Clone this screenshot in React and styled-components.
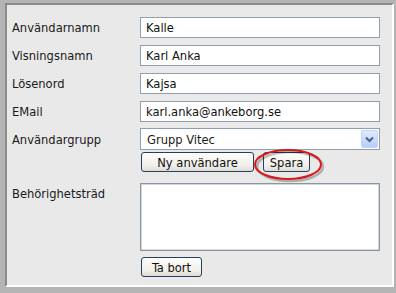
import React from "react"
import styled, { createGlobalStyle } from "styled-components"

const GlobalStyle = createGlobalStyle`
  html, body {
    margin: 0;
    padding: 0;
    background: #b4b4b4;
  }
  * {
    box-sizing: border-box;
  }
`

const font = `"DejaVu Sans Condensed", "Noto Sans", sans-serif`

const Frame = styled.div`
  width: 396px;
  height: 293px;
  background: #b4b4b4;
  padding: 3px 2px 6px 5px;
`

const Panel = styled.div`
  height: 100%;
  background: #e9e9e9;
  border-style: solid;
  border-width: 2px;
  border-color: #8a8a8a #ffffff #ffffff #8a8a8a;
  padding: 12px 0 0 3px;
  font-family: ${font};
  font-size: 12.8px;
  color: #1a1a1a;
`

const Form = styled.div`
  display: grid;
  grid-template-columns: 130px 240px;
  align-items: center;
`

const Label = styled.div`
  padding-left: 2px;
  align-self: ${props => (props.top ? "start" : "center")};
  padding-top: ${props => (props.top ? "3px" : "0")};
  margin-top: ${props => props.mt || 0}px;
`

const Field = styled.div`
  margin-top: ${props => props.mt || 0}px;
  display: flex;
  gap: ${props => props.gap || 0}px;
  align-items: center;
`

const TextInput = styled.input`
  width: 240px;
  height: 21px;
  border: 1px solid #8f9fae;
  background: #fff;
  padding: 0 5px;
  font-family: ${font};
  font-size: 12.8px;
  color: #111;
  outline: none;
`

const Select = styled.div`
  width: 240px;
  height: 22px;
  border: 1px solid #8f9fae;
  background: #fff;
  display: flex;
  align-items: center;
  justify-content: space-between;
  padding: 0 1px 0 6px;
`

const Arrow = styled.div`
  width: 17px;
  height: 18px;
  border: 1px solid #c3d3fd;
  border-radius: 2px;
  background: linear-gradient(#e0eafe, #b9cdf8);
  display: flex;
  align-items: center;
  justify-content: center;
`

const Button = styled.button`
  height: 20px;
  width: ${props => props.w}px;
  border: 1px solid #29405c;
  border-radius: 3px;
  background: linear-gradient(#fdfdfb, #f0efe9 70%, #dedbd2);
  font-family: ${font};
  font-size: 12.8px;
  color: #111;
  padding: 0;
  margin-left: 1px;
`

const Marked = styled.div`
  position: relative;
  display: flex;
`

const Ring = styled.svg`
  position: absolute;
  left: -9px;
  top: -5px;
  width: 72px;
  height: 36px;
  pointer-events: none;
`

const TextArea = styled.div`
  width: 240px;
  height: 68px;
  border: 1px solid #8a97a3;
  box-shadow: inset 0 0 0 1px #d4d8dc;
  background: #fff;
`

const App = () => (
  <>
    <GlobalStyle />
    <Frame>
      <Panel>
        <Form>
          <Label>Användarnamn</Label>
          <Field>
            <TextInput defaultValue="Kalle" />
          </Field>

          <Label mt={7}>Visningsnamn</Label>
          <Field mt={7}>
            <TextInput defaultValue="Karl Anka" />
          </Field>

          <Label mt={7}>Lösenord</Label>
          <Field mt={7}>
            <TextInput defaultValue="Kajsa" />
          </Field>

          <Label mt={7}>EMail</Label>
          <Field mt={7}>
            <TextInput defaultValue="karl.anka@ankeborg.se" />
          </Field>

          <Label mt={6}>Användargrupp</Label>
          <Field mt={6}>
            <Select>
              <span>Grupp Vitec</span>
              <Arrow>
                <svg width="9" height="7" viewBox="0 0 9 7">
                  <path d="M1 1.5 L4.5 5 L8 1.5" fill="none" stroke="#4d6185" strokeWidth="2" />
                </svg>
              </Arrow>
            </Select>
          </Field>

          <div />
          <Field mt={2} gap={8}>
            <Button w={113}>Ny användare</Button>
            <Marked>
              <Button w={47}>Spara</Button>
              <Ring viewBox="0 0 72 36">
                <ellipse cx="37" cy="19.5" rx="33" ry="14.5" fill="none" stroke="rgba(0,0,0,0.25)" strokeWidth="2.5" />
                <ellipse cx="35" cy="17.5" rx="33" ry="14.5" fill="none" stroke="#d7191e" strokeWidth="2" />
              </Ring>
            </Marked>
          </Field>

          <Label top mt={11}>Behörighetsträd</Label>
          <Field mt={11}>
            <TextArea />
          </Field>

          <div />
          <Field mt={6}>
            <Button w={61}>Ta bort</Button>
          </Field>
        </Form>
      </Panel>
    </Frame>
  </>
)

export default App
